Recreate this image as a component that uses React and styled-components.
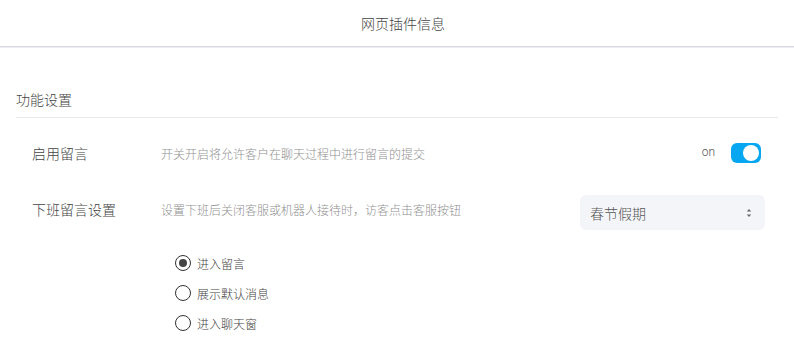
import React, { useState } from "react";
import styled, { createGlobalStyle } from "styled-components";

const GlobalStyle = createGlobalStyle`
  body {
    margin: 0;
    background: #fff;
    font-family: "Noto Sans CJK SC", "Noto Sans", sans-serif;
    color: #333;
  }
`;

const options = [
  { id: "leave", label: "进入留言" },
  { id: "default", label: "展示默认消息" },
  { id: "chat", label: "进入聊天窗" },
];

const App = () => {
  const [enabled, setEnabled] = useState(true);
  const [mode, setMode] = useState("leave");

  return (
    <Page>
      <GlobalStyle />
      <Header>网页插件信息</Header>
      <Section>
        <SectionTitle>功能设置</SectionTitle>
        <Row height={70}>
          <Label>启用留言</Label>
          <Desc>开关开启将允许客户在聊天过程中进行留言的提交</Desc>
          <SwitchWrap>
            <SwitchText>{enabled ? "on" : "off"}</SwitchText>
            <Switch on={enabled} onClick={() => setEnabled(!enabled)}>
              <Knob />
            </Switch>
          </SwitchWrap>
        </Row>
        <Row height={42}>
          <Label>下班留言设置</Label>
          <Desc>设置下班后关闭客服或机器人接待时，访客点击客服按钮</Desc>
          <Select>
            <span>春节假期</span>
            <svg width="6" height="10" viewBox="0 0 6 10">
              <path d="M3 1 L5.2 3.6 H0.8 Z" fill="#666" />
              <path d="M3 9 L5.2 6.4 H0.8 Z" fill="#666" />
            </svg>
          </Select>
        </Row>
        <RadioList>
          {options.map((o) => (
            <RadioRow key={o.id} onClick={() => setMode(o.id)}>
              <RadioCircle checked={mode === o.id} />
              <RadioLabel>{o.label}</RadioLabel>
            </RadioRow>
          ))}
        </RadioList>
      </Section>
    </Page>
  );
};

const Page = styled.div`
  width: 794px;
  height: 338px;
  overflow: hidden;
`;

const Header = styled.div`
  height: 46px;
  display: flex;
  align-items: center;
  justify-content: center;
  padding-left: 12px;
  font-size: 14px;
  font-weight: 300;
  color: #444;
  border-bottom: 1px solid #d9d8e3;
  box-shadow: 0 1px 0 #ecebf2;
`;

const Section = styled.div`
  padding: 42px 16px 0 16px;
`;

const SectionTitle = styled.div`
  font-size: 14px;
  font-weight: 300;
  line-height: 20px;
  color: #444;
  padding-bottom: 8px;
  border-bottom: 1px solid #e8e8ee;
`;

const Row = styled.div`
  height: ${(p) => p.height}px;
  display: flex;
  align-items: center;
  padding: 0 13px 0 16px;
`;

const Label = styled.div`
  width: 129px;
  font-size: 14px;
  font-weight: 300;
  color: #444;
`;

const Desc = styled.div`
  flex: 1;
  font-size: 12px;
  font-weight: 300;
  color: #8f8f8f;
`;

const SwitchWrap = styled.div`
  display: flex;
  align-items: center;
  gap: 16px;
  margin-right: 4px;
`;

const SwitchText = styled.span`
  font-family: "Roboto", "Noto Sans", sans-serif;
  font-size: 12px;
  font-weight: 300;
  color: #555;
  padding-bottom: 2px;
`;

const Switch = styled.div`
  width: 30px;
  height: 20px;
  border-radius: 6px;
  background: ${(p) => (p.on ? "#07a6f0" : "#ccc")};
  display: flex;
  align-items: center;
  justify-content: ${(p) => (p.on ? "flex-end" : "flex-start")};
  padding: 0 2px;
  box-sizing: border-box;
  cursor: pointer;
`;

const Knob = styled.div`
  width: 16px;
  height: 16px;
  border-radius: 50%;
  background: #fff;
`;

const Select = styled.div`
  align-self: flex-end;
  width: 185px;
  height: 35px;
  box-sizing: border-box;
  border-radius: 6px;
  background: #f4f5f9;
  display: flex;
  align-items: center;
  justify-content: space-between;
  padding: 0 13px 0 10px;
  font-size: 14px;
  font-weight: 300;
  color: #555;
`;

const RadioList = styled.div`
  margin-top: 18px;
  padding-left: 159px;
`;

const RadioRow = styled.div`
  height: 30px;
  display: flex;
  align-items: center;
  gap: 6px;
  cursor: pointer;
`;

const RadioCircle = styled.div`
  width: 16px;
  height: 16px;
  box-sizing: border-box;
  border-radius: 50%;
  border: 1.3px solid #333;
  display: flex;
  align-items: center;
  justify-content: center;

  &::after {
    content: "";
    width: 8px;
    height: 8px;
    border-radius: 50%;
    background: #444;
    display: ${(p) => (p.checked ? "block" : "none")};
  }
`;

const RadioLabel = styled.span`
  font-size: 12px;
  font-weight: 300;
  color: #444;
`;

export default App;
